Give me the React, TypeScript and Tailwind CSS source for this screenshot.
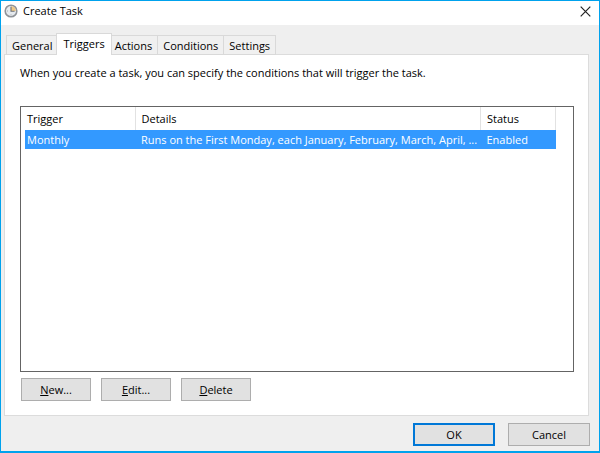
import { useState } from "react";
import type { ReactNode } from "react";

const tabs = ["General", "Triggers", "Actions", "Conditions", "Settings"];

const triggers = [
  {
    trigger: "Monthly",
    details: "Runs on the First Monday, each January, February, March, April, ...",
    status: "Enabled",
  },
];

function ClockIcon() {
  return (
    <svg width="14" height="14" viewBox="0 0 14 14" aria-hidden="true">
      <circle cx="7" cy="7" r="5.8" fill="#e6eaee" stroke="#8f9398" strokeWidth="1.6" />
      <path d="M7 7V2.2A4.8 4.8 0 0 1 11.8 7Z" fill="#efc987" />
      <path d="M7 2.8v4.4h3.6" fill="none" stroke="#6b7077" strokeWidth="1.1" />
      <path d="M3 7h1M7 10.3v1" stroke="#9ba0a5" strokeWidth="0.8" />
    </svg>
  );
}

function CloseIcon() {
  return (
    <svg width="11" height="11" viewBox="0 0 11 11" aria-hidden="true">
      <path d="M0.7 0.7l9.6 9.6M10.3 0.7L0.7 10.3" stroke="#222" strokeWidth="1.2" fill="none" />
    </svg>
  );
}

function PushButton({ children, wide, primary }: { children: ReactNode; wide?: boolean; primary?: boolean }) {
  return (
    <button
      type="button"
      className={`flex h-[23px] items-center justify-center bg-[#e1e1e1] ${wide ? "w-[82px]" : "w-[70px]"} ${
        primary ? "border-2 border-[#0078d7]" : "border border-[#adadad]"
      }`}
    >
      <span>{children}</span>
    </button>
  );
}

export default function App() {
  const [active, setActive] = useState("Triggers");

  return (
    <div className="flex h-screen flex-col border border-b-2 border-[#00a2ed] bg-[#efefef] font-['Open_Sans','Noto_Sans',sans-serif] text-[11px] leading-4 text-black">
      <header className="flex h-6 shrink-0 items-center bg-white pr-1 pb-1 pl-[3px]">
        <ClockIcon />
        <h1 className="ml-[5px] flex-1">Create Task</h1>
        <button type="button" aria-label="Close" className="flex h-5 w-5 items-center justify-center">
          <CloseIcon />
        </button>
      </header>

      <div className="flex min-h-0 flex-1 flex-col pt-2 pr-[10px] pb-[5px] pl-[3px]">
        <div role="tablist" className="relative z-10 -mb-px flex items-end pl-0.5">
          {tabs.map((tab) => (
            <button
              key={tab}
              type="button"
              role="tab"
              aria-selected={tab === active}
              onClick={() => setActive(tab)}
              className={
                tab === active
                  ? "relative z-10 -mx-0.5 h-[22px] border border-b-0 border-[#d9d9d9] bg-white px-[6px] pb-0.5"
                  : "h-5 border border-l-0 border-[#d9d9d9] bg-[#f0f0f0] px-[5px] pt-0.5 first:border-l"
              }
            >
              {tab}
            </button>
          ))}
        </div>

        <section role="tabpanel" className="flex min-h-0 flex-1 flex-col border border-[#dcdcdc] bg-white px-[15px] pt-[10px] pb-[14px]">
          <p>When you create a task, you can specify the conditions that will trigger the task.</p>

          <div className="mt-[25px] -mr-px min-h-0 flex-1 overflow-hidden border border-[#646464] pr-[17px] pl-1">
            <table className="w-full table-fixed border-collapse text-left">
              <thead>
                <tr className="h-[23px]">
                  <th className="w-[110px] border-r border-[#e2e2e2] px-0.5 font-normal">Trigger</th>
                  <th className="border-r border-[#e2e2e2] pr-0 pl-[6px] font-normal">Details</th>
                  <th className="w-[75px] border-r border-[#e2e2e2] px-[6px] font-normal">Status</th>
                </tr>
              </thead>
              <tbody>
                {triggers.map((row) => (
                  <tr key={row.trigger} className="h-[19px] bg-[#3399ff] text-white">
                    <td className="px-0.5">{row.trigger}</td>
                    <td className="truncate pr-0 pl-[6px]">{row.details}</td>
                    <td className="px-[6px]">{row.status}</td>
                  </tr>
                ))}
              </tbody>
            </table>
          </div>

          <div className="mt-[6px] flex gap-[10px] pl-px">
            <PushButton>
              <u>N</u>ew...
            </PushButton>
            <PushButton>
              <u>E</u>dit...
            </PushButton>
            <PushButton>
              <u>D</u>elete
            </PushButton>
          </div>
        </section>

        <footer className="-mr-px mt-[7px] flex justify-end gap-[13px]">
          <PushButton wide primary>
            OK
          </PushButton>
          <PushButton wide>Cancel</PushButton>
        </footer>
      </div>
    </div>
  );
}
